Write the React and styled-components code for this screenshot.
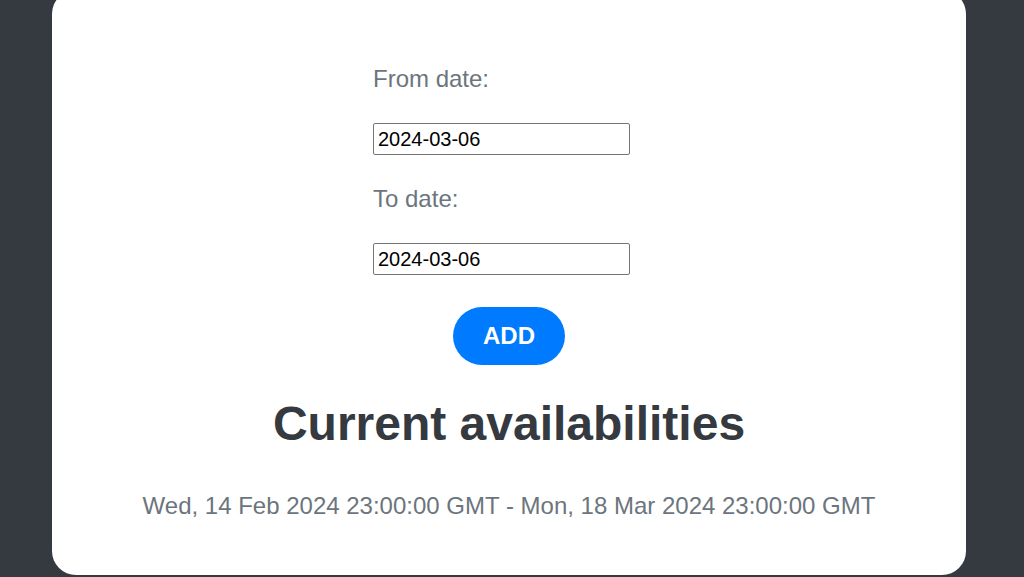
import React, { useState } from 'react';
import styled, { createGlobalStyle } from 'styled-components';

const GlobalStyle = createGlobalStyle`
  html, body {
    margin: 0;
    padding: 0;
    background: #343a40;
    overflow: hidden;
  }
  body {
    font-family: "Liberation Sans", Arial, sans-serif;
  }
`;

const Page = styled.div`
  display: flex;
  padding-left: 52px;
`;

const Card = styled.div`
  width: 914px;
  margin-top: -10px;
  padding: 75px 0 56px;
  box-sizing: border-box;
  background: #fff;
  border-radius: 24px;
  display: flex;
  flex-direction: column;
  align-items: center;
`;

const Form = styled.form`
  width: 272px;
  display: flex;
  flex-direction: column;
  align-items: flex-start;
`;

const Label = styled.label`
  font-size: 24px;
  line-height: 27px;
  color: #6c757d;
  margin-top: ${p => (p.$first ? '0' : '30px')};
`;

const DateInput = styled.input`
  width: 257px;
  height: 32px;
  margin-top: 31px;
  box-sizing: border-box;
  padding: 0 4px;
  border: 1px solid #767676;
  border-radius: 2px;
  font-family: "Liberation Sans", Arial, sans-serif;
  font-size: 20px;
  color: #000;
  outline: none;
`;

const AddButton = styled.button`
  align-self: center;
  margin-top: 32px;
  height: 58px;
  padding: 0 30px;
  border: none;
  border-radius: 29px;
  background: #007bff;
  color: #fff;
  font-family: "Liberation Sans", Arial, sans-serif;
  font-weight: bold;
  font-size: 24px;
  cursor: pointer;
`;

const Heading = styled.h2`
  margin: 32px 0 0;
  font-size: 48px;
  line-height: 54px;
  font-weight: bold;
  color: #343a40;
`;

const Availability = styled.p`
  margin: 41px 0 0;
  font-size: 24px;
  line-height: 27px;
  color: #6c757d;
`;

const App = () => {
  const [fromDate, setFromDate] = useState('2024-03-06');
  const [toDate, setToDate] = useState('2024-03-06');

  return (
    <Page>
      <GlobalStyle />
      <Card>
        <Form onSubmit={e => e.preventDefault()}>
          <Label $first htmlFor="from">From date:</Label>
          <DateInput id="from" value={fromDate} onChange={e => setFromDate(e.target.value)} />
          <Label htmlFor="to">To date:</Label>
          <DateInput id="to" value={toDate} onChange={e => setToDate(e.target.value)} />
          <AddButton type="submit">ADD</AddButton>
        </Form>
        <Heading>Current availabilities</Heading>
        <Availability>Wed, 14 Feb 2024 23:00:00 GMT - Mon, 18 Mar 2024 23:00:00 GMT</Availability>
      </Card>
    </Page>
  );
};

export default App;
